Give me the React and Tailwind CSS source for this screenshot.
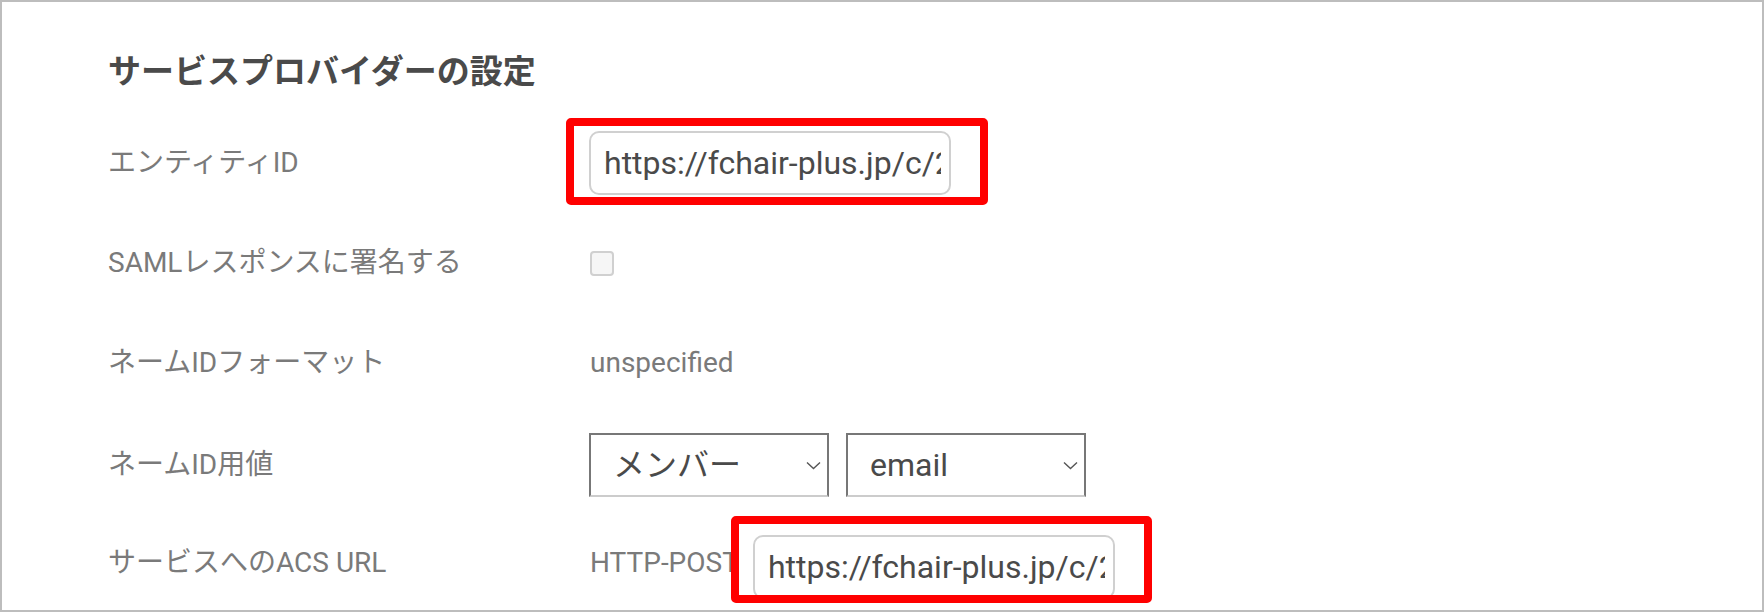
const Label = ({ children }) => (
  <div className="w-[482px] shrink-0 text-[28px] leading-none text-[#7a7a7a]">{children}</div>
)

const TextField = ({ value }) => (
  <input
    readOnly
    value={value}
    className="h-[64px] w-[362px] rounded-[10px] border-2 border-[#d0d0d0] bg-white pl-[13px] pr-[8px] text-[32px] text-[#4a4a4a] outline-none"
  />
)

const Highlight = ({ className }) => (
  <div className={`pointer-events-none absolute rounded-[5px] border-[8px] border-[#ff0000] ${className}`} />
)

const Select = ({ value, options }) => (
  <div className="relative">
    <select
      defaultValue={value}
      className="h-[64px] w-[240px] appearance-none rounded-none border-2 border-[#777] border-b-[#cccccc] bg-white pl-[22px] text-[32px] text-[#4a4a4a] outline-none"
    >
      {options.map((o) => (
        <option key={o}>{o}</option>
      ))}
    </select>
    <svg
      className="pointer-events-none absolute right-[8px] top-[28px]"
      width="15"
      height="9"
      viewBox="0 0 15 9"
      fill="none"
    >
      <path d="M1 1.5l6.5 6 6.5-6" stroke="#555" strokeWidth="1.4" />
    </svg>
  </div>
)

export default function App() {
  const url = 'https://fchair-plus.jp/c/2f8a3c1d/saml/metadata'

  return (
    <div
      className="h-[612px] w-[1764px] overflow-hidden border-2 border-[#bdbdbd] bg-white pl-[106px] pt-[46px]"
      style={{ fontFamily: 'Roboto, "Noto Sans CJK JP", sans-serif' }}
    >
      <h2 className="mb-[17px] text-[33px] font-bold leading-[48px] text-[#4a4a4a]">
        サービスプロバイダーの設定
      </h2>

      <div className="flex h-[100px] items-center">
        <Label>エンティティID</Label>
        <div className="relative -ml-px">
          <TextField value={url} />
          <Highlight className="-left-[23px] -right-[37px] -top-[13px] -bottom-[10px]" />
        </div>
      </div>

      <div className="flex h-[100px] items-center">
        <Label>SAMLレスポンスに署名する</Label>
        <span className="block h-[25px] w-[24px] rounded-[4px] border-2 border-[#d0d0d0] bg-[#f6f6f6]" />
      </div>

      <div className="flex h-[100px] items-center">
        <Label>ネームIDフォーマット</Label>
        <span className="text-[28px] leading-none text-[#7a7a7a]">unspecified</span>
      </div>

      <div className="flex h-[100px] items-center pt-[4px]">
        <Label>ネームID用値</Label>
        <div className="-ml-px flex gap-[17px]">
          <Select value="メンバー" options={['メンバー', 'グループ']} />
          <Select value="email" options={['email', 'name', 'id']} />
        </div>
      </div>

      <div className="flex h-[100px] items-center">
        <Label>サービスへのACS URL</Label>
        <span className="text-[28px] leading-none text-[#7a7a7a]">HTTP-POST</span>
        <div className="relative ml-[14px] mt-[8px]">
          <TextField value={url} />
          <Highlight className="-left-[22px] -right-[37px] -top-[19px] -bottom-[4px]" />
        </div>
      </div>
    </div>
  )
}
